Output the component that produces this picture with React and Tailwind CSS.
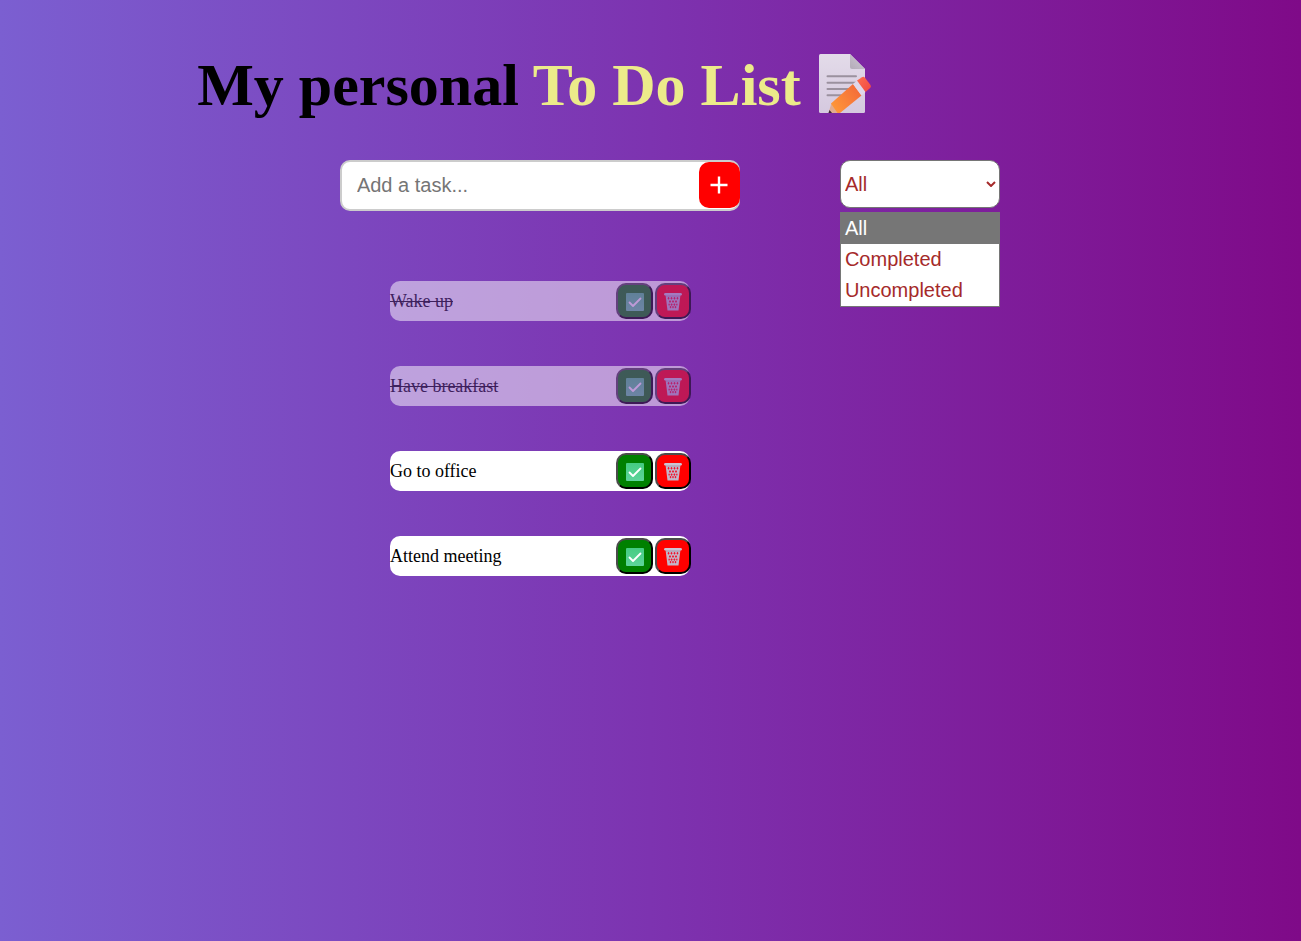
import { useState } from "react";

const initialTasks = [
  { id: 1, text: "Wake up", done: true },
  { id: 2, text: "Have breakfast", done: true },
  { id: 3, text: "Go to office", done: false },
  { id: 4, text: "Attend meeting", done: false },
];

const filters = ["All", "Completed", "Uncompleted"];

function MemoIcon() {
  return (
    <svg viewBox="0 0 53 62" className="h-[62px] w-[53px] shrink-0" role="img" aria-label="memo">
      <defs>
        <linearGradient id="paper" x1="0" y1="0" x2="0" y2="1">
          <stop offset="0" stopColor="#e3dbe9" />
          <stop offset="1" stopColor="#d5c9df" />
        </linearGradient>
        <linearGradient id="fold" x1="0" y1="1" x2="1" y2="0">
          <stop offset="0" stopColor="#b3abb8" />
          <stop offset="1" stopColor="#d0c8d5" />
        </linearGradient>
        <linearGradient id="pencil" x1="0" y1="0.8" x2="1" y2="0.2">
          <stop offset="0" stopColor="#ff9838" />
          <stop offset="1" stopColor="#f3693a" />
        </linearGradient>
        <linearGradient id="eraser" x1="0" y1="0" x2="1" y2="1">
          <stop offset="0" stopColor="#ff6f4e" />
          <stop offset="1" stopColor="#ef4644" />
        </linearGradient>
      </defs>
      <path d="M1.5 0H31L46 15V57.500Q46 59 44.500 59H1.500Q0 59 0 57.500V1.500Q0 0 1.500 0Z" fill="url(#paper)" />
      <path d="M31 0L46 15H33Q31 15 31 13Z" fill="url(#fold)" />
      <path d="M8.500 22.300H37M8.500 28.700H37M8.500 35H33M8.500 41.300H22" stroke="#9b919f" strokeWidth="2" strokeLinecap="round" />
      <path d="M12.500 49L20 59H9.500Z" fill="#e2ab90" />
      <path d="M10.500 56L13 59H9.500Z" fill="#3b2938" />
      <path d="M34 30L42.500 41.500L21 59H18.500L12 49.500Z" fill="url(#pencil)" />
      <path d="M38 26.500L46.500 38L42.500 41.500L34 30Z" fill="#e0d8ea" />
      <path d="M38 26.500L43 23.200Q44.500 22.300 46 23.800L51.500 31Q52.500 32.500 51.200 34L46.500 38Z" fill="url(#eraser)" />
    </svg>
  );
}

function CheckIcon() {
  return (
    <svg viewBox="-1 -2 19 20" className="h-5 w-[19px]" aria-hidden="true">
      <defs>
        <linearGradient id="check" x1="0" y1="0" x2="0" y2="1">
          <stop offset="0" stopColor="#45cc82" />
          <stop offset="1" stopColor="#5ed49b" />
        </linearGradient>
      </defs>
      <rect width="18" height="18" rx="1" fill="url(#check)" />
      <path d="M3.500 9.500L7 13L14.500 5.500" fill="none" stroke="#fff" strokeWidth="1.800" strokeLinecap="round" strokeLinejoin="round" />
    </svg>
  );
}

function TrashIcon() {
  return (
    <svg viewBox="0 -2 18 20" className="h-5 w-[18px]" aria-hidden="true">
      <path d="M1.500 1.500H16.500L14.500 17.500H3.500Z" fill="#c3b6c9" />
      <path
        d="M4.500 3.800l1.100 1.500l-1.100 1.500l-1-1.500zM7.500 3.800l1.100 1.500l-1.100 1.500l-1.100-1.500zM10.500 3.800l1.100 1.500l-1.100 1.500l-1.100-1.500zM13.500 3.800l1 1.500l-1 1.500l-1.100-1.500zM6 7l1.100 1.500l-1.100 1.500l-1.100-1.500zM9 7l1.100 1.500l-1.100 1.500l-1.100-1.500zM12 7l1.100 1.500l-1.100 1.500l-1.100-1.500zM5 10.200l1 1.400l-1 1.400l-.6-1.400zM7.600 10.200l1.100 1.400l-1.100 1.400l-1.100-1.400zM10.400 10.200l1.100 1.400l-1.100 1.400l-1.100-1.400zM13 10.200l.6 1.400l-.6 1.400l-1-1.400zM6.500 12.800l1 1.300l-1 1.300l-1-1.300zM9 12.800l1 1.300l-1 1.300l-1-1.300zM11.500 12.800l1 1.300l-1 1.300l-1-1.300z"
        fill="#f0142e"
      />
      <path d="M1.300 1.300H16.700" stroke="#cbc3d2" strokeWidth="2.400" strokeLinecap="round" />
      <path d="M2 3H16" stroke="#a396aa" strokeWidth="0.800" />
    </svg>
  );
}

export default function App() {
  const [tasks, setTasks] = useState(initialTasks);
  const [draft, setDraft] = useState("");
  const [filter, setFilter] = useState("All");

  const addTask = (event) => {
    event.preventDefault();
    if (!draft.trim()) return;
    setTasks([...tasks, { id: Date.now(), text: draft, done: false }]);
    setDraft("");
  };
  const toggle = (id) => setTasks(tasks.map((t) => (t.id === id ? { ...t, done: !t.done } : t)));
  const remove = (id) => setTasks(tasks.filter((t) => t.id !== id));
  const visible = tasks.filter((t) => filter === "All" || t.done === (filter === "Completed"));

  return (
    <div className="min-h-screen bg-[linear-gradient(to_right,#7b5fd1,#7d33b0_50%,#7f0a88)] font-['Liberation_Serif',serif] text-black">
      <div className="w-[83%] pt-[50px]">
        <h1 className="flex items-center justify-center gap-[18px] pr-[11px] text-[60px] leading-[70px] font-bold">
          <span>
            My personal <span className="text-[#eceb8a]">To Do List</span>
          </span>
          <MemoIcon />
        </h1>

        <div className="mt-10 grid grid-cols-[1fr_400px_1fr] items-start font-['Liberation_Sans',sans-serif] text-xl">
          <form
            onSubmit={addTask}
            className="col-start-2 flex h-[51px] rounded-[10px] border-2 border-[#ccc] bg-white"
          >
            <input
              type="text"
              aria-label="Add a task"
              placeholder="Add a task..."
              value={draft}
              onChange={(event) => setDraft(event.target.value)}
              className="min-w-0 flex-1 bg-transparent px-[15px] pb-0.5 outline-none placeholder:text-[#757575]"
            />
            <button
              type="submit"
              aria-label="Add"
              className="-mr-0.5 flex h-[46px] w-[41px] shrink-0 items-center justify-center rounded-[10px] bg-[#ff0000]"
            >
              <svg viewBox="0 0 18 18" className="size-[18px]" aria-hidden="true">
                <path d="M0.500 9H17.500M9 0.500V17.500" stroke="#fff" strokeWidth="2.400" />
              </svg>
            </button>
          </form>

          <div className="relative ml-[100px] w-40 text-[#a52a2a]">
            <select
              aria-label="Filter tasks"
              value={filter}
              onChange={(event) => setFilter(event.target.value)}
              className="block h-12 w-full appearance-none rounded-[10px] border border-[#767676] bg-white px-1 outline-none"
            >
              {filters.map((name) => (
                <option key={name}>{name}</option>
              ))}
            </select>
            <svg viewBox="0 0 10 6" className="pointer-events-none absolute top-[21px] right-1 h-1.5 w-2.5" aria-hidden="true">
              <path d="M1 1L5 5L9 1" fill="none" stroke="#a52a2a" strokeWidth="2" />
            </svg>
            <ul role="listbox" aria-label="Filter options" className="absolute top-[52px] left-0 w-full border border-[#767676] bg-white">
              {filters.map((name) => (
                <li
                  key={name}
                  role="option"
                  aria-selected={filter === name}
                  onClick={() => setFilter(name)}
                  className="h-[31px] px-1 leading-[31px] aria-selected:bg-[#767676] aria-selected:text-white"
                >
                  {name}
                </li>
              ))}
            </ul>
          </div>
        </div>

        <ul className="mx-auto mt-[70px] flex w-[300px] flex-col gap-[45px] pb-10">
          {visible.map((task) => (
            <li
              key={task.id}
              className={`flex h-10 items-center rounded-[10px] bg-white text-lg ${task.done ? "opacity-50" : ""}`}
            >
              <span className={`flex-1 ${task.done ? "line-through" : ""}`}>{task.text}</span>
              <div className="-mr-px flex gap-0.5">
                <button
                  type="button"
                  aria-label={`Complete ${task.text}`}
                  onClick={() => toggle(task.id)}
                  className="flex h-9 w-[37px] items-center justify-center rounded-[10px] border-2 border-t-[#4c4c4c] border-r-black border-b-black border-l-[#4c4c4c] bg-[#008000]"
                >
                  <CheckIcon />
                </button>
                <button
                  type="button"
                  aria-label={`Delete ${task.text}`}
                  onClick={() => remove(task.id)}
                  className="flex h-9 w-9 items-center justify-center rounded-[10px] border-2 border-t-[#4c4c4c] border-r-black border-b-black border-l-[#4c4c4c] bg-[#ff0000]"
                >
                  <TrashIcon />
                </button>
              </div>
            </li>
          ))}
        </ul>
      </div>
    </div>
  );
}
